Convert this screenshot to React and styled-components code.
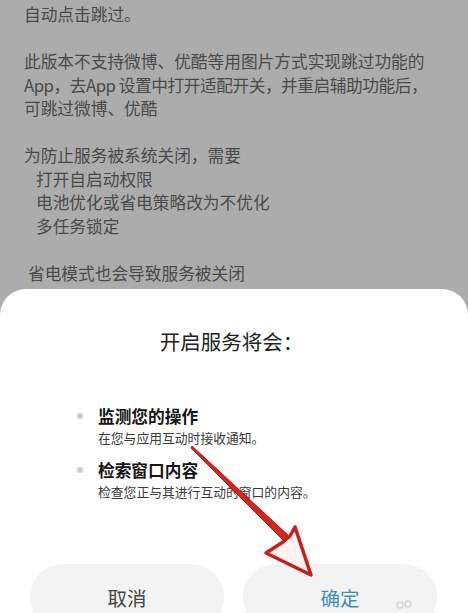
import React from "react";
import styled, { createGlobalStyle } from "styled-components";

const Global = createGlobalStyle`
  html, body {
    margin: 0;
    padding: 0;
    background: #acacac;
  }
  body {
    width: 468px;
    height: 613px;
    overflow: hidden;
    font-family: "Noto Sans CJK SC", "Noto Sans", sans-serif;
  }
`;

const Page = styled.div`
  position: relative;
  width: 468px;
  height: 613px;
  overflow: hidden;
  display: flex;
  flex-direction: column;
  background: #acacac;
`;

const Notes = styled.div`
  padding: 3px 24px 0;
  font-size: 16.7px;
  line-height: 23.5px;
  color: #4a4a4a;
`;

const Line = styled.div`
  padding-left: ${(p) => p.$indent || 0}px;
  letter-spacing: ${(p) => p.$tight || 0}px;
  white-space: nowrap;
  height: 23.5px;
`;

const Sheet = styled.div`
  margin-top: 4px;
  flex: 1;
  background: #ffffff;
  border-radius: 26px 26px 0 0;
  display: flex;
  flex-direction: column;
  padding: 38px 31px 0 30px;
`;

const Title = styled.div`
  text-align: center;
  font-size: 20.5px;
  line-height: 28px;
  color: #222;
  padding-right: 4px;
`;

const List = styled.div`
  margin: 49px 0 0 47px;
  display: flex;
  flex-direction: column;
  gap: 10px;
`;

const Item = styled.div`
  display: flex;
  gap: 15px;
`;

const Bullet = styled.span`
  flex: none;
  width: 6px;
  height: 6px;
  margin-top: 9px;
  border-radius: 50%;
  background: #cbcbcb;
`;

const ItemText = styled.div`
  display: flex;
  flex-direction: column;
`;

const ItemTitle = styled.div`
  font-size: 16.7px;
  line-height: 24px;
  font-weight: 700;
  color: #151515;
`;

const ItemSub = styled.div`
  font-size: 12.8px;
  line-height: 20px;
  color: #3a3a3a;
`;

const Buttons = styled.div`
  margin-top: 62px;
  display: flex;
  gap: 19px;
`;

const Button = styled.div`
  flex: 1;
  height: 66px;
  border-radius: 33px;
  background: #f3f3f3;
  display: flex;
  align-items: center;
  justify-content: center;
  font-size: 19.5px;
  color: ${(p) => (p.$primary ? "#3d90c4" : "#454545")};
`;

const Overlay = styled.svg`
  position: absolute;
  left: 0;
  top: 0;
  pointer-events: none;
`;

const notes = [
  { t: "自动点击跳过。" },
  { t: "" },
  { t: "此版本不支持微博、优酷等用图片方式实现跳过功能的" },
  { t: "App，去App 设置中打开适配开关，并重启辅助功能后，", s: -0.45 },
  { t: "可跳过微博、优酷" },
  { t: "" },
  { t: "为防止服务被系统关闭，需要" },
  { t: "打开自启动权限", i: 12 },
  { t: "电池优化或省电策略改为不优化", i: 12 },
  { t: "多任务锁定", i: 12 },
  { t: "" },
  { t: "省电模式也会导致服务被关闭", i: 4 },
];

const items = [
  { title: "监测您的操作", sub: "在您与应用互动时接收通知。" },
  { title: "检索窗口内容", sub: "检查您正与其进行互动的窗口的内容。" },
];

export default function App() {
  return (
    <Page>
      <Global />
      <Notes>
        {notes.map((n, k) => (
          <Line key={k} $indent={n.i} $tight={n.s}>
            {n.t}
          </Line>
        ))}
      </Notes>
      <Sheet>
        <Title>开启服务将会：</Title>
        <List>
          {items.map((it) => (
            <Item key={it.title}>
              <Bullet />
              <ItemText>
                <ItemTitle>{it.title}</ItemTitle>
                <ItemSub>{it.sub}</ItemSub>
              </ItemText>
            </Item>
          ))}
        </List>
        <Buttons>
          <Button>取消</Button>
          <Button $primary>确定</Button>
        </Buttons>
      </Sheet>
      <Overlay width="468" height="613" viewBox="0 0 468 613">
        <polygon
          points="192,446 289,536 284,541 191,448"
          fill="#d8261f"
          stroke="#9e1512"
          strokeWidth="1"
          strokeLinejoin="round"
        />
        <polygon
          points="283,542 266,553 311,575 295,527 290,536"
          fill="rgba(255,235,235,0.6)"
          stroke="#c81f1a"
          strokeWidth="3.5"
          strokeLinejoin="round"
        />
        <g fill="none" stroke="#d6d6d6" strokeWidth="1.5">
          <circle cx="400" cy="605" r="3" />
          <circle cx="408" cy="604" r="3" />
        </g>
      </Overlay>
    </Page>
  );
}
